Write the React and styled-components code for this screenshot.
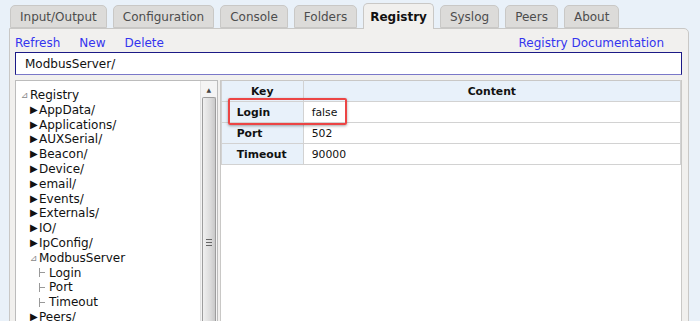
import React from "react"
import styled, { createGlobalStyle } from "styled-components"

const GlobalStyle = createGlobalStyle`
  html, body {
    margin: 0;
    padding: 0;
    overflow: hidden;
    background: #e9f1f9;
    font-family: "DejaVu Sans", Verdana, sans-serif;
  }
`

const Page = styled.div`
  padding: 2px 0 0 9px;
  width: 680px;
  height: 319px;
  overflow: hidden;
  position: relative;
`

const TabBar = styled.div`
  display: flex;
  align-items: flex-end;
  gap: 6px;
  padding-left: 1px;
  height: 26px;
`

const Tab = styled.div`
  box-sizing: border-box;
  height: ${(p) => (p.$active ? "26px" : "23px")};
  padding: 0 ${(p) => (p.$active ? "6px" : "9px")};
  display: flex;
  align-items: center;
  font-size: 12px;
  color: ${(p) => (p.$active ? "#111" : "#4d4d4d")};
  font-weight: ${(p) => (p.$active ? "bold" : "normal")};
  background: ${(p) => (p.$active ? "#f1f0ee" : "#dcdbd9")};
  border: 1px solid #c9c8c6;
  border-bottom: ${(p) => (p.$active ? "none" : "1px solid #c9c8c6")};
  border-radius: 5px 5px 0 0;
  margin-bottom: ${(p) => (p.$active ? "-1px" : "0")};
  position: relative;
  z-index: ${(p) => (p.$active ? 2 : 0)};
`

const Panel = styled.div`
  box-sizing: border-box;
  width: 680px;
  height: 300px;
  background: #f1f0ee;
  border: 1px solid #c9c8c6;
  border-radius: 0 5px 0 0;
  padding: 4px 6px 0 5px;
  position: relative;
  z-index: 1;
`

const LinkRow = styled.div`
  display: flex;
  align-items: center;
  height: 19px;
  gap: 19px;
`

const Link = styled.a`
  font-size: 12px;
  color: #3434ee;
  text-decoration: none;
  margin-left: ${(p) => (p.$push ? "auto" : "0")};
  margin-right: ${(p) => (p.$push ? "18px" : "0")};
`

const PathBox = styled.div`
  box-sizing: border-box;
  height: 23px;
  background: #fff;
  border: 1px solid #1c1a86;
  border-bottom-color: #7a78c8;
  display: flex;
  align-items: center;
  padding-left: 9px;
  font-size: 12px;
  color: #111;
`

const Split = styled.div`
  display: flex;
  gap: 2px;
  margin-top: 5px;
`

const TreeBox = styled.div`
  box-sizing: border-box;
  width: 203px;
  height: 260px;
  background: #fff;
  border: 1px solid #bcbcbc;
  display: flex;
`

const TreeList = styled.div`
  flex: 1;
  padding: 7px 0 0 5px;
  font-size: 12px;
  color: #111;
`

const TreeRow = styled.div`
  height: 14.8px;
  line-height: 14.8px;
  display: flex;
  align-items: center;
  padding-left: ${(p) => p.$depth * 9}px;
  white-space: nowrap;
`

const Marker = styled.span`
  display: inline-block;
  width: 9px;
  font-size: ${(p) => (p.$kind === "open" ? "9px" : "10px")};
  color: ${(p) => (p.$kind === "closed" ? "#111" : "#888")};
`

const LeafLine = styled.span`
  display: inline-block;
  width: 6px;
  height: 9px;
  margin-right: 3px;
  border-left: 1px solid #999;
  position: relative;
  &::after {
    content: "";
    position: absolute;
    left: 0;
    top: 4px;
    width: 5px;
    border-top: 1px solid #999;
  }
`

const ScrollBar = styled.div`
  width: 16px;
  background: #f4f4f4;
  border-left: 1px solid #e2e2e2;
  display: flex;
  flex-direction: column;
  align-items: center;
`

const ScrollArrow = styled.div`
  height: 16px;
  width: 100%;
  display: flex;
  align-items: center;
  justify-content: center;
  font-size: 6px;
  color: #444;
`

const Thumb = styled.div`
  box-sizing: border-box;
  width: 14px;
  flex: 1;
  border: 1px solid #9d9d9d;
  border-bottom: none;
  border-radius: 2px 2px 0 0;
  background: linear-gradient(to right, #f0f0f0, #dcdcdc 60%, #c9c9c9);
  display: flex;
  flex-direction: column;
  align-items: center;
  padding-top: 141px;
  gap: 2px;
`

const Grip = styled.div`
  width: 6px;
  height: 1px;
  background: #666;
`

const TableBox = styled.div`
  box-sizing: border-box;
  width: 463px;
  height: 260px;
  background: #fff;
  border: 1px solid #c9c8c6;
  border-top: none;
`

const Table = styled.table`
  border-collapse: collapse;
  width: 100%;
  font-size: 10.8px;
  color: #111;
`

const Th = styled.th`
  height: 20px;
  padding: 0;
  background: #e8f1fa;
  border: 1px solid #d2d2d2;
  border-top: 1px solid #c9c8c6;
  font-weight: bold;
  width: ${(p) => p.$w || "auto"};
`

const KeyCell = styled.td`
  height: 20px;
  padding: 0 0 0 15px;
  background: #e8f1fa;
  border: 1px solid #d2d2d2;
  font-weight: bold;
`

const ValueCell = styled.td`
  padding: 0 0 0 8px;
  border: 1px solid #d2d2d2;
`

const Highlight = styled.div`
  position: absolute;
  left: 228px;
  top: 98px;
  width: 119px;
  height: 27px;
  box-sizing: border-box;
  border: 2px solid #ec4545;
  border-radius: 2px;
  box-shadow: 0 1px 3px rgba(0, 0, 0, 0.35);
  pointer-events: none;
  z-index: 5;
`

const tabs = ["Input/Output", "Configuration", "Console", "Folders", "Registry", "Syslog", "Peers", "About"]

const tree = [
  { label: "Registry", depth: 0, kind: "open" },
  { label: "AppData/", depth: 1, kind: "closed" },
  { label: "Applications/", depth: 1, kind: "closed" },
  { label: "AUXSerial/", depth: 1, kind: "closed" },
  { label: "Beacon/", depth: 1, kind: "closed" },
  { label: "Device/", depth: 1, kind: "closed" },
  { label: "email/", depth: 1, kind: "closed" },
  { label: "Events/", depth: 1, kind: "closed" },
  { label: "Externals/", depth: 1, kind: "closed" },
  { label: "IO/", depth: 1, kind: "closed" },
  { label: "IpConfig/", depth: 1, kind: "closed" },
  { label: "ModbusServer", depth: 1, kind: "open" },
  { label: "Login", depth: 2, kind: "leaf" },
  { label: "Port", depth: 2, kind: "leaf" },
  { label: "Timeout", depth: 2, kind: "leaf" },
  { label: "Peers/", depth: 1, kind: "closed" },
]

const rows = [
  { key: "Login", value: "false" },
  { key: "Port", value: "502" },
  { key: "Timeout", value: "90000" },
]

export default function App() {
  return (
    <Page>
      <GlobalStyle />
      <TabBar>
        {tabs.map((t) => (
          <Tab key={t} $active={t === "Registry"}>{t}</Tab>
        ))}
      </TabBar>
      <Panel>
        <LinkRow>
          <Link>Refresh</Link>
          <Link>New</Link>
          <Link>Delete</Link>
          <Link $push>Registry Documentation</Link>
        </LinkRow>
        <PathBox>ModbusServer/</PathBox>
        <Split>
          <TreeBox>
            <TreeList>
              {tree.map((n) => (
                <TreeRow key={n.label} $depth={n.depth}>
                  {n.kind === "leaf" ? (
                    <LeafLine />
                  ) : (
                    <Marker $kind={n.kind}>{n.kind === "open" ? "⊿" : "▶"}</Marker>
                  )}
                  {n.label}
                </TreeRow>
              ))}
            </TreeList>
            <ScrollBar>
              <ScrollArrow>▲</ScrollArrow>
              <Thumb>
                <Grip />
                <Grip />
                <Grip />
              </Thumb>
            </ScrollBar>
          </TreeBox>
          <TableBox>
            <Table>
              <thead>
                <tr>
                  <Th $w="81px">Key</Th>
                  <Th>Content</Th>
                </tr>
              </thead>
              <tbody>
                {rows.map((r) => (
                  <tr key={r.key}>
                    <KeyCell>{r.key}</KeyCell>
                    <ValueCell>{r.value}</ValueCell>
                  </tr>
                ))}
              </tbody>
            </Table>
          </TableBox>
        </Split>
      </Panel>
      <Highlight />
    </Page>
  )
}
